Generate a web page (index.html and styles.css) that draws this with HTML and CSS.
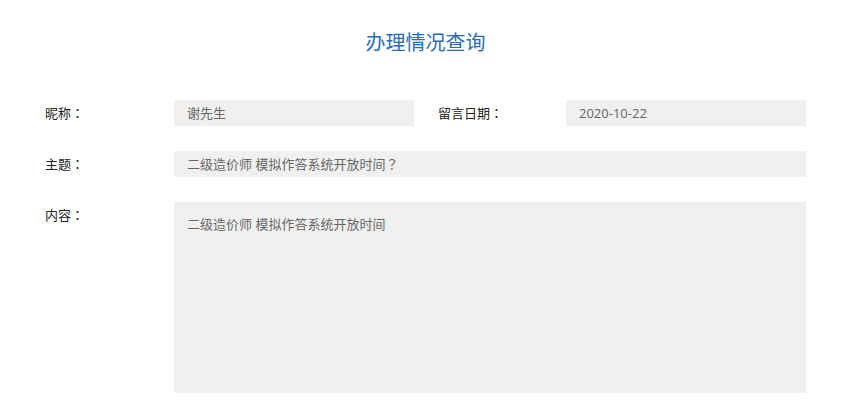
FILE: index.html
```html
<!DOCTYPE html>
<html lang="zh-CN">
<head>
  <meta charset="UTF-8">
  <meta name="viewport" content="width=device-width, initial-scale=1.0">
  <title>办理情况查询</title>
  <link rel="stylesheet" href="styles.css">
</head>
<body>
<div class="page">
  <h1 class="title">办理情况查询</h1>

  <!-- Message details -->
  <div class="detail-form">
    <div class="row">
      <label class="label">昵称<span class="punct" lang="ja">：</span></label>
      <div class="field">谢先生</div>
      <label class="label label-gap">留言日期<span class="punct" lang="ja">：</span></label>
      <div class="field">2020-10-22</div>
    </div>

    <div class="row">
      <label class="label">主题<span class="punct" lang="ja">：</span></label>
      <div class="field field-wide">二级造价师 模拟作答系统开放时间<span class="punct" lang="ja">？</span></div>
    </div>

    <div class="row row-top">
      <label class="label">内容<span class="punct" lang="ja">：</span></label>
      <div class="field field-wide field-area">二级造价师 模拟作答系统开放时间</div>
    </div>
  </div>
</div>
</body>
</html>
```

FILE: styles.css
```css
body {
  font-family: "Open Sans", "Noto Sans CJK SC", sans-serif;
  margin: 0;
  padding: 0;
  background-color: #fff;
  color: #333;
  font-size: 13px;
}

.page {
  width: 761px;
  margin: 0 0 0 45px;
  padding-top: 29px;
}

.title {
  margin: 0;
  text-align: center;
  font-size: 20px;
  font-weight: normal;
  line-height: 28px;
  color: #2a6db3;
}

.detail-form {
  margin-top: 43px;
  display: flex;
  flex-direction: column;
  gap: 25px;
}

.row {
  display: grid;
  grid-template-columns: 129px 240px 24px 128px 240px;
  align-items: center;
}

.row-top {
  align-items: start;
}

.label {
  color: #222;
  line-height: 26px;
}

/* centred full-width punctuation, as in the original font */
.punct {
  font-family: "Noto Sans CJK JP", sans-serif;
}

.label-gap {
  grid-column: 4;
}

.field {
  grid-column: 2;
  height: 26px;
  line-height: 26px;
  padding: 0 13px;
  background-color: #f0f0f0;
  color: #666;
}

.field + .label + .field {
  grid-column: 5;
}

.field-wide {
  grid-column: 2 / 6;
}

.field-area {
  height: 191px;
  line-height: 20px;
  padding-top: 12px;
  box-sizing: border-box;
}
```
